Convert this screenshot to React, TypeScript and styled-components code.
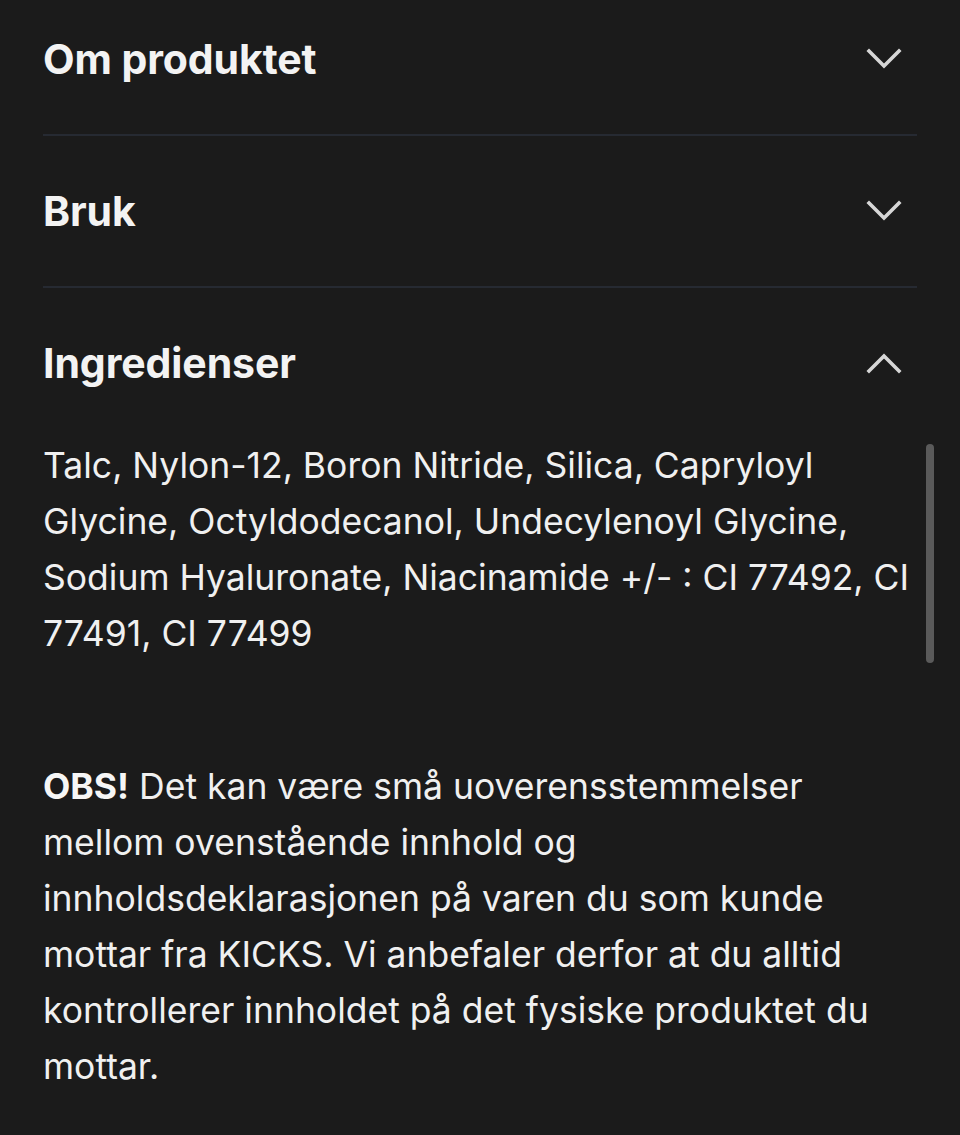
import React from "react";
import styled, { createGlobalStyle } from "styled-components";

const GlobalStyle = createGlobalStyle`
  html, body {
    margin: 0;
    padding: 0;
    background: #1b1b1b;
  }
  body {
    font-family: Inter, "Liberation Sans", sans-serif;
    color: #f2f2f2;
    overflow: hidden;
  }
`;

type SectionType = {
    title: string
    open: boolean
}

const sections: Array<SectionType> = [
    {title: "Om produktet", open: false},
    {title: "Bruk", open: false},
    {title: "Ingredienser", open: true},
];

const ingredients =
    "Talc, Nylon-12, Boron Nitride, Silica, Capryloyl Glycine, Octyldodecanol, Undecylenoyl Glycine, Sodium Hyaluronate, Niacinamide +/- : CI 77492, CI 77491, CI 77499";

function Chevron({up}: { up: boolean }) {
    return (
        <svg width="36" height="22" viewBox="0 0 36 22" fill="none">
            <path
                d={up ? "M3 19 L18 4 L33 19" : "M3 3 L18 18 L33 3"}
                stroke="#d6d6d6"
                strokeWidth="3.6"
                strokeLinecap="square"
                strokeLinejoin="miter"
            />
        </svg>
    );
}

export default function App() {
    return (
        <>
            <GlobalStyle/>
            <Page>
                {sections.map((s, i) => (
                    <Section key={s.title} $last={i === sections.length - 1}>
                        <Header $first={i === 0}>
                            <Title>{s.title}</Title>
                            <Chevron up={s.open}/>
                        </Header>
                        {s.open && (
                            <Panel>
                                <ScrollArea>
                                    <Text>{ingredients}</Text>
                                    <Thumb/>
                                </ScrollArea>
                                <Notice>
                                    <strong>OBS!</strong> Det kan være små uoverensstemmelser mellom ovenstående innhold og
                                    innholdsdeklarasjonen på varen du som kunde mottar fra KICKS. Vi anbefaler derfor at du
                                    alltid kontrollerer innholdet på det fysiske produktet du mottar.
                                </Notice>
                            </Panel>
                        )}
                    </Section>
                ))}
            </Page>
        </>
    );
}

const Page = styled.div`
    padding: 0 43px;
`

const Section = styled.section<{ $last: boolean }>`
    border-bottom: ${props => props.$last ? "none" : "2px solid #262a32"};
`

// the page is scrolled a little, so the first header is cut at the top
const Header = styled.div<{ $first: boolean }>`
    display: flex;
    align-items: center;
    justify-content: space-between;
    height: 150px;
    margin-top: ${props => props.$first ? "-16px" : "0"};
    padding-right: 15px;
    box-sizing: border-box;
`

const Title = styled.h2`
    margin: 0;
    font-size: 41px;
    font-weight: 700;
    letter-spacing: -0.1px;
    color: #f3f3f3;
`

const Panel = styled.div`
    padding-bottom: 60px;
`

const ScrollArea = styled.div`
    position: relative;
    height: 225px;
    margin-right: -18px;
    padding-right: 18px;
`

const Text = styled.p`
    margin: 0;
    font-size: 35.5px;
    line-height: 56px;
    font-weight: 400;
    color: #f0f0f0;
`

const Thumb = styled.div`
    position: absolute;
    right: 1px;
    top: 6px;
    width: 8px;
    height: 219px;
    border-radius: 4px;
    background: #5a5a5a;
`

const Notice = styled.p`
    margin: 96px 0 0;
    font-size: 35.5px;
    line-height: 56px;
    color: #f0f0f0;

    strong {
        font-weight: 700;
        color: #f6f6f6;
    }
`
